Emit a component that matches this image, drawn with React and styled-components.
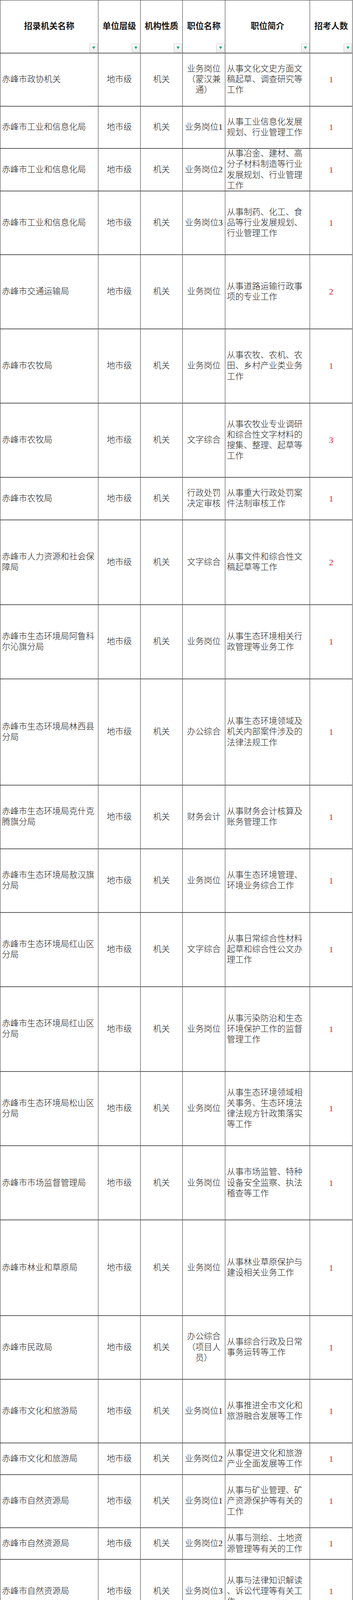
import React from 'react';
import styled, { createGlobalStyle } from 'styled-components';

const UNIT = 27.16;
const COLS = '251px 108px 108px 109px 217px 109px';

const GlobalStyle = createGlobalStyle`
  html, body {
    margin: 0;
    padding: 0;
    background: #fff;
  }
  body {
    font-family: "Liberation Serif", "Noto Sans CJK SC", serif;
    color: #1a1a1a;
  }
`;

const Sheet = styled.div`
  width: 903px;
  border-top: 1px solid #333;
  border-left: 1px solid #333;
  box-sizing: border-box;
`;

const Row = styled.div`
  display: grid;
  grid-template-columns: ${COLS};
  height: ${props => props.$units * UNIT}px;
  border-bottom: 2px solid #5a5a5a;
  box-sizing: border-box;
`;

const Cell = styled.div`
  position: relative;
  display: flex;
  align-items: center;
  justify-content: ${props => (props.$left ? 'flex-start' : 'center')};
  padding: 0 4px;
  border-right: 1px solid #333;
  box-sizing: border-box;
  overflow: hidden;
  font-size: 21.5px;
  line-height: ${UNIT}px;
`;

const Text = styled.span`
  display: block;
  text-align: ${props => (props.$left ? 'left' : 'center')};
  line-break: ${props => (props.$anywhere ? 'anywhere' : 'auto')};
  font-weight: ${props => (props.$bold ? 700 : 300)};
`;

const Count = styled.span`
  color: #e8141b;
  font-family: "Liberation Serif", serif;
  font-size: 22px;
`;

const FilterButton = styled.span`
  position: absolute;
  right: 1px;
  bottom: 1px;
  width: 21px;
  height: 22px;
  box-sizing: border-box;
  border: 1px solid #c4c4c4;
  background: linear-gradient(#ffffff, #ececec);
  display: flex;
  align-items: center;
  justify-content: center;
`;

const Arrow = styled.span`
  width: 0;
  height: 0;
  border-left: 4px solid transparent;
  border-right: 4px solid transparent;
  border-top: 7px solid #1ea878;
`;

const headers = ['招录机关名称', '单位层级', '机构性质', '职位名称', '职位简介', '招考人数'];

const J = '机关';
const C = '参公单位';

// name, nature, post, summary, count, height in line units, break anywhere
const rows = [
  ['赤峰市政协机关', J, '业务岗位（蒙汉兼通）', '从事文化文史方面文稿起草、调查研究等工作', 1, 5],
  ['赤峰市工业和信息化局', J, '业务岗位1', '从事工业信息化发展规划、行业管理工作', 1, 4],
  ['赤峰市工业和信息化局', J, '业务岗位2', '从事冶金、建材、高分子材料制造等行业发展规划、行业管理工作', 1, 4],
  ['赤峰市工业和信息化局', J, '业务岗位3', '从事制药、化工、食品等行业发展规划、行业管理工作', 1, 6],
  ['赤峰市交通运输局', J, '业务岗位', '从事道路运输行政事项的专业工作', 2, 7],
  ['赤峰市农牧局', J, '业务岗位', '从事农牧、农机、农田、乡村产业类业务工作', 1, 7],
  ['赤峰市农牧局', J, '文字综合', '从事农牧业专业调研和综合性文字材料的搜集、整理、起草等工作', 3, 7],
  ['赤峰市农牧局', J, '行政处罚决定审核', '从事重大行政处罚案件法制审核工作', 1, 4],
  ['赤峰市人力资源和社会保障局', J, '文字综合', '从事文件和综合性文稿起草等工作', 2, 8],
  ['赤峰市生态环境局阿鲁科尔沁旗分局', J, '业务岗位', '从事生态环境相关行政管理等业务工作', 1, 7],
  ['赤峰市生态环境局林西县分局', J, '办公综合', '从事生态环境领域及机关内部案件涉及的法律法规工作', 1, 10],
  ['赤峰市生态环境局克什克腾旗分局', J, '财务会计', '从事财务会计核算及账务管理工作', 1, 6],
  ['赤峰市生态环境局敖汉旗分局', J, '业务岗位', '从事生态环境管理、环境业务综合工作', 1, 6],
  ['赤峰市生态环境局红山区分局', J, '文字综合', '从事日常综合性材料起草和综合性公文办理工作', 1, 7],
  ['赤峰市生态环境局红山区分局', J, '业务岗位', '从事污染防治和生态环境保护工作的监督管理工作', 1, 8],
  ['赤峰市生态环境局松山区分局', J, '业务岗位', '从事生态环境领域相关事务、生态环境法律法规方针政策落实等工作', 1, 7],
  ['赤峰市市场监督管理局', J, '业务岗位', '从事市场监管、特种设备安全监察、执法稽查等工作', 1, 7],
  ['赤峰市林业和草原局', J, '业务岗位', '从事林业草原保护与建设相关业务工作', 1, 9],
  ['赤峰市民政局', J, '办公综合（项目人员）', '从事综合行政及日常事务运转等工作', 1, 6],
  ['赤峰市文化和旅游局', J, '业务岗位1', '从事推进全市文化和旅游融合发展等工作', 1, 6],
  ['赤峰市文化和旅游局', J, '业务岗位2', '从事促进文化和旅游产业全面发展等工作', 1, 3],
  ['赤峰市自然资源局', J, '业务岗位1', '从事与矿业管理、矿产资源保护等有关的工作', 1, 5],
  ['赤峰市自然资源局', J, '业务岗位2', '从事与测绘、土地资源管理等有关的工作', 1, 3],
  ['赤峰市自然资源局', J, '业务岗位3', '从事与法律知识解读、诉讼代理等有关工作', 1, 6, true],
  ['赤峰市自然资源局红山区分局', J, '业务岗位', '从事与地质相关的综合管理和协调等工作', 1, 4],
  ['赤峰市自然资源局松山区分局', J, '财务会计', '从事自然资源系统财务记账、会计等工作', 1, 5],
  ['赤峰市档案史志馆', C, '信息化建设', '从事档案信息化工作，数字档案馆（室）、电子档案业务工作', 1, 4],
  ['赤峰市档案史志馆', C, '档案管理（蒙汉兼通）', '从事汉、蒙、满文纸质和电子档案管理工作', 1, 3],
  ['赤峰市档案史志馆', C, '业务岗位1', '从事征集、整理、编写地方党史文献资料工作', 1, 3],
  ['赤峰市档案史志馆', C, '业务岗位2', '从事档案接收和征集工作，馆藏档案资料的保管、鉴定等工作', 1, 4],
  ['赤峰市档案史志馆', C, '业务岗位3', '从事城市建设档案指导、验收和接收等工作', 1, 3],
  ['赤峰市档案史志馆', C, '业务岗位4', '从事档案资源的研究、开发与利用等工作', 1, 3, true],
  ['赤峰市供销合作社联合社', C, '财务会计', '从事单位财务会计、会计核算、资产管理及内部审计等工作', 1, 5],
  ['赤峰市就业服务中心', C, '文字综合', '从事行政事务处理和综合文稿起草工作', 1, 8],
  ['赤峰市就业服务中心', C, '业务岗位', '从事就业领域相关政策落实和统计分析工作', 1, 7],
  ['赤峰市林业和草原督查保障中心', C, '业务岗位', '从事林业和草原督查巡查等辅助性、技术性工作', 1, 7],
  ['赤峰市社会救助综合服务中心', C, '文字综合', '从事文字材料的起草及办公室相关工作', 1, 3],
  ['赤峰市社会救助综合服务中心', C, '业务岗位', '从事与医学专业有关的救助管理工作', 1, 3],
  ['赤峰市水资源保护和水利工程质量监测中心', C, '业务岗位', '主要从事水资源保护及水利工程建设项目质量监督技术支撑工作', 3, 6],
  ['赤峰市法律援助中心', C, '业务岗位', '从事法律援助等相关具体业务工作', 2, 3],
  ['赤峰市统计调查中心', C, '文字综合', '从事机关综合文稿等文字材料起草等相关工作', 1, 4],
  ['赤峰市统计调查中心', C, '业务岗位', '从事统计报表及经济统计分析研究工作', 1, 4],
  ['赤峰市团委', C, '办公综合', '从事机关综合管理、公文撰写、活动策划等工作', 1, 5],
  ['赤峰市信访接待中心', C, '财务会计', '从事单位财务会计记账、会计核算、资产管理、财务报表等工作', 1, 5],
  ['赤峰市信访接待中心', C, '业务岗位', '从事群众来访接待等相关业务工作', 1, 3],
];

function HeaderRow() {
  return (
    <Row $units={5}>
      {headers.map(h => (
        <Cell key={h}>
          <Text $bold>{h}</Text>
          <FilterButton><Arrow /></FilterButton>
        </Cell>
      ))}
    </Row>
  );
}

export default function App() {
  return (
    <>
      <GlobalStyle />
      <Sheet>
        <HeaderRow />
        {rows.map(([name, kind, post, desc, count, units, anywhere], i) => (
          <Row key={i} $units={units}>
            <Cell $left><Text $left>{name}</Text></Cell>
            <Cell><Text>地市级</Text></Cell>
            <Cell><Text>{kind}</Text></Cell>
            <Cell><Text>{post}</Text></Cell>
            <Cell $left><Text $left $anywhere={anywhere}>{desc}</Text></Cell>
            <Cell><Count>{count}</Count></Cell>
          </Row>
        ))}
      </Sheet>
    </>
  );
}
